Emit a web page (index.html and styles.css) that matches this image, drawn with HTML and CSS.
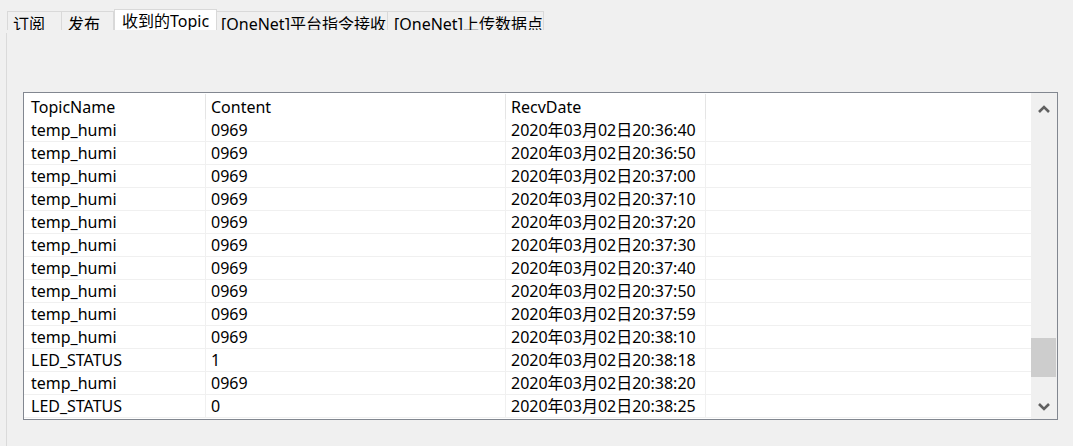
FILE: index.html
```html
<!DOCTYPE html>
<html lang="zh">
<head>
<meta charset="utf-8">
<title>收到的Topic</title>
<link rel="stylesheet" href="styles.css">
</head>
<body>
<div class="tabs">
  <div class="tab t1">订阅</div>
  <div class="tab t2">发布</div>
  <div class="tab t3 active">收到的Topic</div>
  <div class="tab t4">[OneNet]平台指令接收</div>
  <div class="tab t5">[OneNet]上传数据点</div>
</div>
<div class="page">
  <div class="list">
    <div class="grid">
      <div class="row head">
        <div class="cell c1">TopicName</div>
        <div class="cell c2">Content</div>
        <div class="cell c3">RecvDate</div>
        <div class="cell fill"></div>
      </div>
      <div class="row"><div class="cell c1">temp_humi</div><div class="cell c2">0969</div><div class="cell c3">2020年03月02日20:36:40</div><div class="cell fill"></div></div>
      <div class="row"><div class="cell c1">temp_humi</div><div class="cell c2">0969</div><div class="cell c3">2020年03月02日20:36:50</div><div class="cell fill"></div></div>
      <div class="row"><div class="cell c1">temp_humi</div><div class="cell c2">0969</div><div class="cell c3">2020年03月02日20:37:00</div><div class="cell fill"></div></div>
      <div class="row"><div class="cell c1">temp_humi</div><div class="cell c2">0969</div><div class="cell c3">2020年03月02日20:37:10</div><div class="cell fill"></div></div>
      <div class="row"><div class="cell c1">temp_humi</div><div class="cell c2">0969</div><div class="cell c3">2020年03月02日20:37:20</div><div class="cell fill"></div></div>
      <div class="row"><div class="cell c1">temp_humi</div><div class="cell c2">0969</div><div class="cell c3">2020年03月02日20:37:30</div><div class="cell fill"></div></div>
      <div class="row"><div class="cell c1">temp_humi</div><div class="cell c2">0969</div><div class="cell c3">2020年03月02日20:37:40</div><div class="cell fill"></div></div>
      <div class="row"><div class="cell c1">temp_humi</div><div class="cell c2">0969</div><div class="cell c3">2020年03月02日20:37:50</div><div class="cell fill"></div></div>
      <div class="row"><div class="cell c1">temp_humi</div><div class="cell c2">0969</div><div class="cell c3">2020年03月02日20:37:59</div><div class="cell fill"></div></div>
      <div class="row"><div class="cell c1">temp_humi</div><div class="cell c2">0969</div><div class="cell c3">2020年03月02日20:38:10</div><div class="cell fill"></div></div>
      <div class="row"><div class="cell c1">LED_STATUS</div><div class="cell c2">1</div><div class="cell c3">2020年03月02日20:38:18</div><div class="cell fill"></div></div>
      <div class="row"><div class="cell c1">temp_humi</div><div class="cell c2">0969</div><div class="cell c3">2020年03月02日20:38:20</div><div class="cell fill"></div></div>
      <div class="row"><div class="cell c1">LED_STATUS</div><div class="cell c2">0</div><div class="cell c3">2020年03月02日20:38:25</div><div class="cell fill"></div></div>
    </div>
    <div class="vscroll">
      <div class="sb-btn sb-up">
        <svg width="12" height="8" viewBox="0 0 12 8"><path d="M1 7 L6 2 L11 7" fill="none" stroke="#606060" stroke-width="2.6"/></svg>
      </div>
      <div class="sb-track"><div class="sb-thumb"></div></div>
      <div class="sb-btn sb-down">
        <svg width="12" height="8" viewBox="0 0 12 8"><path d="M1 1 L6 6 L11 1" fill="none" stroke="#606060" stroke-width="2.6"/></svg>
      </div>
    </div>
  </div>
</div>
</body>
</html>
```

FILE: styles.css
```css
html, body {
  margin: 0;
  padding: 0;
  background: #f0f0f0;
  overflow: hidden;
}
body {
  font-family: "Noto Sans", "Noto Sans CJK SC", sans-serif;
  font-size: 16px;
  color: #000;
  width: 1073px;
  height: 446px;
}

/* tab strip */
.tabs {
  display: flex;
  align-items: flex-start;
  height: 30px;
  padding-left: 7px;
  overflow: hidden;
}
.tab {
  box-sizing: border-box;
  margin-top: 11px;
  height: 30px;
  padding-top: 2px;
  line-height: 21px;
  border-top: 1px solid #d9d9d9;
  border-right: 1px solid #d9d9d9;
  white-space: nowrap;
  background: #f0f0f0;
}
.t1 { width: 55px; padding-left: 5px; border-left: 1px solid #d9d9d9; }
.t2 { width: 52px; padding-left: 6px; }
.t3 { width: 103px; padding-left: 7px; }
.t4 { width: 171px; padding-left: 4px; }
.t5 { width: 156px; padding-left: 6px; }
.tab.active {
  margin-top: 9px;
  padding-top: 1px;
  background: #fff;
  border-left: 1px solid #d9d9d9;
}

/* page */
.page {
  margin-top: 3px;
  margin-left: 6px;
  height: 413px;
  border-left: 1px solid #dadada;
  padding-left: 16px;
  padding-top: 59px;
  box-sizing: border-box;
}

.list {
  width: 1035px;
  height: 328px;
  box-sizing: border-box;
  border: 1px solid #828790;
  background: #fff;
  display: flex;
}
.grid {
  flex: 1;
  overflow: hidden;
}
.row {
  display: flex;
  height: 23px;
  box-sizing: border-box;
  border-bottom: 1px solid #f0f0f0;
  line-height: 22px;
  white-space: nowrap;
}
.row.head {
  height: 26px;
  border-bottom: none;
  padding-top: 3px;
}
.cell {
  box-sizing: border-box;
  border-right: 1px solid #f0f0f0;
  padding-left: 5px;
  overflow: hidden;
}
.head .cell {
  border-right-color: #e5e5e5;
  margin-top: -2px;
  padding-top: 2px;
}
.c1 { width: 182px; padding-left: 7px; }
.c2 { width: 300px; }
.c3 { width: 200px; }
.cell.fill { flex: 1; border-right: none; }

/* scrollbar */
.vscroll {
  width: 26px;
  background: #f0f0f0;
  display: flex;
  flex-direction: column;
}
.sb-btn {
  display: flex;
  align-items: center;
  justify-content: center;
  padding-right: 1px;
}
.sb-btn svg { display: block; }
.sb-up { height: 31px; }
.sb-down { height: 25px; }
.sb-track { flex: 1; }
.sb-thumb {
  margin-top: 214px;
  width: 25px;
  height: 39px;
  background: #cdcdcd;
}
```
